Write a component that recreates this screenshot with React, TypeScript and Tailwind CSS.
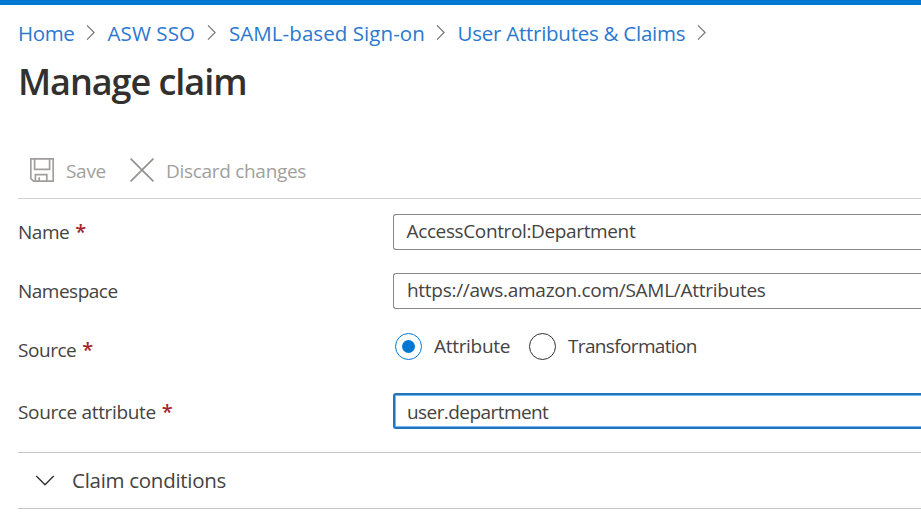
import React from "react";

const crumbs = [
  { label: "Home", width: "w-[57px]", tracking: "tracking-[-0.4px]" },
  { label: "ASW SSO", width: "w-[89px]", tracking: "tracking-[0.1px]" },
  { label: "SAML-based Sign-on", width: "w-[196px]", tracking: "tracking-[0.07px]" },
  { label: "User Attributes & Claims", width: "w-[229px]", tracking: "tracking-[-0.25px]" },
];

function CrumbArrow() {
  return (
    <svg className="mr-[11px] ml-[9.5px] block h-[16px] w-[12px] shrink-0" viewBox="0 0 12 16" fill="none" stroke="#767676" strokeWidth="1.2">
      <path d="M2 .4 9.1 7.5 2 14.6" />
    </svg>
  );
}

function SaveIcon() {
  return (
    <svg className="mb-[3px] block h-6 w-6 shrink-0" viewBox="0 0 24 24" fill="none" stroke="#a19f9d" strokeWidth="1.7">
      <path d="M.8.8h22.4v22.4H3.6L.8 20.6z" />
      <path d="M4.6 1v10.4h15V1M5.4 23v-6.4h11.4V23M9.2 23v-3.8" />
    </svg>
  );
}

function Label({ text, tracking, required }: { text: string; tracking: string; required?: boolean }) {
  return (
    <div className={`flex w-[375px] shrink-0 whitespace-nowrap text-[19px] leading-[36px] ${tracking}`}>
      <span>{text}</span>
      {required && <span className="ml-[6px] text-[20px] font-semibold text-[#a4262c]">*</span>}
    </div>
  );
}

export default function App() {
  return (
    <div className="h-[530px] w-full overflow-hidden bg-white font-['Segoe_UI','Open_Sans',sans-serif] text-[#444342]">
      <div className="h-[5px] bg-[#0078d4]" />
      <nav className="mt-[12px] ml-[18px] flex h-[32px] items-center text-[20.5px] whitespace-nowrap text-[#2b78d0]">
        {crumbs.map((c) => (
          <React.Fragment key={c.label}>
            <a className={`${c.width} ${c.tracking} shrink-0`}>{c.label}</a>
            <CrumbArrow />
          </React.Fragment>
        ))}
      </nav>
      <h1 className="mt-[9px] ml-[18px] h-[48px] text-[36px] leading-[48px] font-[580] tracking-[-1.05px] text-[#323130]">Manage claim</h1>

      <div className="mt-[39px] ml-[18px] flex h-[54px] items-center border-b-[1.5px] border-[#d2d0ce] pl-[12px] text-[19px] whitespace-nowrap text-[#a19f9d]">
        <SaveIcon />
        <span className="ml-[12px] w-[64px] tracking-[-0.3px]">Save</span>
        <svg className="mb-[3px] block h-6 w-6 shrink-0" viewBox="0 0 24 24" fill="none" stroke="#949290" strokeWidth="1.7">
          <path d="m.6.6 22.8 22.8M23.4.6.6 23.4" />
        </svg>
        <span className="ml-[12px] tracking-[-0.3px]">Discard changes</span>
      </div>

      <div className="mt-[15px] ml-[18px] flex h-[36px]">
        <Label text="Name" tracking="tracking-[-0.45px]" required />
        <div className="flex-1 rounded-l-[3px] border border-r-0 border-[#8a8886] pl-[12.5px] text-[19px] leading-[33px] tracking-[-0.37px]">AccessControl:Department</div>
      </div>
      <div className="mt-[23px] ml-[18px] flex h-[36px]">
        <Label text="Namespace" tracking="tracking-[-0.5px]" />
        <div className="flex-1 rounded-l-[3px] border border-r-0 border-[#8a8886] pl-[13px] text-[19px] leading-[33px] tracking-[-0.28px]">https://aws.amazon.com/SAML/Attributes</div>
      </div>
      <div className="mt-[23px] ml-[18px] flex h-[36px]">
        <Label text="Source" tracking="tracking-[-0.45px]" required />
        <div className="-mt-1 ml-[2px] flex h-[36px] items-center text-[19px] whitespace-nowrap">
          <span className="flex h-[27px] w-[27px] shrink-0 items-center justify-center rounded-full border border-[#0078d4]">
            <span className="h-[13px] w-[13px] rounded-full bg-[#0078d4]" />
          </span>
          <span className="ml-[12px] w-[95px] tracking-[-0.3px]">Attribute</span>
          <span className="h-[27px] w-[27px] shrink-0 rounded-full border border-[#323130]" />
          <span className="ml-[12px] tracking-[-0.65px]">Transformation</span>
        </div>
      </div>
      <div className="mt-[25px] ml-[18px] flex h-[36px]">
        <div className="pt-px">
          <Label text="Source attribute" tracking="tracking-[-0.35px]" required />
        </div>
        <div className="flex-1 rounded-l-[3px] border-2 border-r-0 border-[#1f74bd] pl-[12px] text-[19px] leading-[34px] tracking-[-0.57px] shadow-[inset_0_1px_0_#7ab8ec,inset_0_-1px_0_#7ab8ec,inset_1px_0_0_#7ab8ec]">user.department</div>
      </div>
      <div className="mt-[23px] ml-[18px] flex h-[57px] items-center border-y border-[#c8c6c4] pl-[17px]">
        <svg className="block h-[12px] w-[20px] shrink-0" viewBox="0 0 20 12" fill="none" stroke="#323130" strokeWidth="1.4">
          <path d="m1.3 1 8.7 8.7L18.7 1" />
        </svg>
        <span className="ml-[17px] text-[20.5px] tracking-[-0.28px]">Claim conditions</span>
      </div>
    </div>
  );
}
